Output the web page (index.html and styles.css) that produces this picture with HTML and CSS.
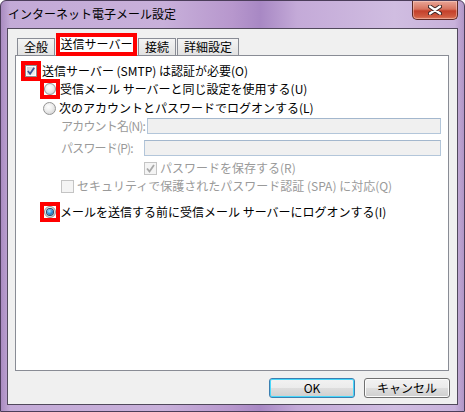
FILE: index.html
```html
<!DOCTYPE html>
<html lang="ja">
<head>
    <meta charset="UTF-8">
    <title>インターネット電子メール設定</title>
    <link rel="stylesheet" href="styles.css">
</head>
<body>
  <div class="window">
    <div class="titlebar">
      <span class="title">インターネット電子メール設定</span>
      <span class="close">
        <svg width="14" height="10" viewBox="0 0 14 10">
          <path d="M2 1.5 L12 8.5 M12 1.5 L2 8.5" stroke="#3b2424" stroke-width="4.2" stroke-linecap="round"/>
          <path d="M2 1.5 L12 8.5 M12 1.5 L2 8.5" stroke="#fff" stroke-width="2.2" stroke-linecap="round"/>
        </svg>
      </span>
    </div>

    <div class="client">
      <div class="tabs">
        <span class="tab">全般</span>
        <span class="tab active">送信サーバー</span>
        <span class="tab">接続</span>
        <span class="tab">詳細設定</span>
      </div>

      <div class="panel">
        <!-- smtp auth -->
        <div class="row lvl0">
          <span class="mark">
            <span class="check">
              <svg width="10" height="10" viewBox="0 0 11 11"><path d="M2 5.5 L4.5 8.5 L9 2" fill="none" stroke="#3d5794" stroke-width="2"/></svg>
            </span>
          </span>
          <span class="text after-mark">送信サーバー (SMTP) は認証が必要(O)</span>
        </div>
        <div class="row lvl1">
          <span class="mark"><span class="radio"></span></span>
          <span class="text">受信メール サーバーと同じ設定を使用する(U)</span>
        </div>
        <div class="row lvl1b gap1">
          <span class="radio"></span>
          <span class="text spaced">次のアカウントとパスワードでログオンする(L)</span>
        </div>
        <div class="row lvl2">
          <span class="field-label">アカウント名(N):</span>
          <span class="field"></span>
        </div>
        <div class="row lvl2 gap4">
          <span class="field-label">パスワード(P):</span>
          <span class="field"></span>
        </div>
        <div class="row lvl3 gap2">
          <span class="check off">
            <svg width="11" height="11" viewBox="0 0 11 11"><path d="M2 5.5 L4.5 8.5 L9 2" fill="none" stroke="#a8a8a8" stroke-width="1.8"/></svg>
          </span>
          <span class="text spaced disabled">パスワードを保存する(R)</span>
        </div>
        <div class="row lvl2">
          <span class="check off"></span>
          <span class="text spaced disabled">セキュリティで保護されたパスワード認証 (SPA) に対応(Q)</span>
        </div>
        <div class="row lvl1 gap8">
          <span class="mark"><span class="radio on"></span></span>
          <span class="text">メールを送信する前に受信メール サーバーにログオンする(I)</span>
        </div>
      </div>

      <div class="buttons">
        <button class="btn default">OK</button>
        <button class="btn">キャンセル</button>
      </div>
    </div>
  </div>
</body>
</html>
```

FILE: styles.css
```css
* {
    margin: 0;
    padding: 0;
    box-sizing: border-box;
}
body {
    width: 465px;
    height: 412px;
    overflow: hidden;
    background: #fff;
    font-family: "Noto Sans CJK JP", "Liberation Sans", sans-serif;
    font-size: 12px;
    color: #000;
}
.window {
    width: 465px;
    height: 412px;
    display: flex;
    flex-direction: column;
    border: 1px solid #4b3d5a;
    border-radius: 6px 6px 0 0;
    background:
        linear-gradient(to right, rgba(110, 70, 140, 0.3), rgba(0, 0, 0, 0) 2%, rgba(0, 0, 0, 0) 98%, rgba(110, 70, 140, 0.25)),
        linear-gradient(to right, #c3aad7 0%, #c8b0da 35%, #b797cd 50%, #a888c4 56%, #c4aad8 64%, #d0bde1 85%, #c7b0da 100%);
}
.titlebar {
    height: 27px;
    display: flex;
    align-items: flex-start;
    padding-left: 7px;
}
.title {
    line-height: 26px;
}
.close {
    margin-left: auto;
    margin-right: 6px;
    width: 46px;
    height: 19px;
    display: flex;
    align-items: center;
    justify-content: center;
    border: 1px solid #5e2a26;
    border-top: none;
    border-radius: 0 0 5px 5px;
    background: linear-gradient(#e9a697 0%, #d7735f 45%, #c4402b 55%, #cf5a40 85%, #e07c5f 100%);
    box-shadow: inset 0 0 0 1px rgba(255, 220, 210, 0.45);
}
.client {
    flex: 1;
    margin: 0 6px 6px;
    border: 1px solid #51495c;
    background: #f0f0f0;
    display: flex;
    flex-direction: column;
    padding: 4px 8px 0 7px;
}

/* tabs */
.tabs {
    display: flex;
    align-items: flex-end;
    height: 22px;
    margin-left: 2px;
    gap: 1px;
}
.tab {
    height: 17px;
    padding: 0 6px;
    border: 1px solid #898c95;
    border-bottom: none;
    background: linear-gradient(#f4f4f4, #e2e2e2);
    line-height: 15px;
    text-align: center;
}
.tab.active {
    position: relative;
    z-index: 1;
    height: 23px;
    margin-bottom: -1px;
    padding: 0;
    width: 81px;
    border: 4px solid #f00;
    background: #fff;
    line-height: 14px;
}
.panel {
    height: 316px;
    border: 1px solid #898c95;
    background: #fff;
    display: flex;
    flex-direction: column;
    padding-top: 6px;
}

/* option rows */
.row {
    height: 18px;
    display: flex;
    align-items: center;
    white-space: nowrap;
}
.lvl0 { padding-left: 5px; }
.lvl1 { padding-left: 24px; }
.lvl1b { padding-left: 27px; }
.lvl2 { padding-left: 45px; padding-right: 7px; }
.lvl3 { padding-left: 128px; }
.gap1 { margin-top: 1px; }
.gap2 { margin-top: 2px; }
.gap4 { margin-top: 4px; }
.gap8 { margin-top: 8px; }
.text { line-height: 18px; }
.after-mark { margin-left: 1px; }
.spaced { margin-left: 3px; }
.disabled { color: #9a9a9a; }

.mark {
    display: flex;
    flex-shrink: 0;
    border: 4px solid #f00;
}
.check {
    width: 13px;
    height: 13px;
    flex-shrink: 0;
    display: flex;
    align-items: center;
    justify-content: center;
    border: 1px solid #8e8f8f;
    background: linear-gradient(135deg, #c9cdd4, #f7f7f7);
    box-shadow: inset 0 0 0 1px #fdfdfd;
}
.check.off {
    border-color: #c4c4c4;
    background: #f4f4f4;
    box-shadow: none;
}
.radio {
    width: 13px;
    height: 13px;
    flex-shrink: 0;
    border-radius: 50%;
    border: 1px solid #949494;
    background: radial-gradient(circle at 40% 35%, #fff 0%, #ececec 45%, #c9c9c9 100%);
    display: flex;
    align-items: center;
    justify-content: center;
}
.mark .check,
.mark .radio {
    width: 12px;
    height: 12px;
}
.radio.on::after {
    content: "";
    width: 6px;
    height: 6px;
    border-radius: 50%;
    background: radial-gradient(circle at 40% 35%, #a9e2ff 0%, #2f8fd6 50%, #0b4478 100%);
    box-shadow: 0 0 0 1px #2a4a6a;
}
.field-label {
    flex-shrink: 0;
    min-width: 83px;
    padding-right: 2px;
    color: #9a9a9a;
    line-height: 18px;
    letter-spacing: -0.8px;
}
.field {
    flex: 1;
    height: 16px;
    border: 1px solid #b3c6da;
    border-top-color: #a3b7cd;
    background: #f0f0f0;
}

/* dialog buttons */
.buttons {
    display: flex;
    justify-content: flex-end;
    gap: 9px;
    margin-top: 7px;
    margin-right: -1px;
}
.btn {
    width: 86px;
    height: 20px;
    border: 1px solid #707070;
    border-radius: 3px;
    background: linear-gradient(#f2f2f2 0%, #ebebeb 50%, #dddddd 51%, #cfcfcf 100%);
    box-shadow: inset 0 0 0 1px #fcfcfc;
    font-family: "Noto Sans CJK JP", "Liberation Sans", sans-serif;
    font-size: 12px;
    line-height: 16px;
    color: #000;
}
.btn.default {
    border-color: #3c7fb1;
    box-shadow: inset 0 0 0 1px #48d8fb;
}
```
